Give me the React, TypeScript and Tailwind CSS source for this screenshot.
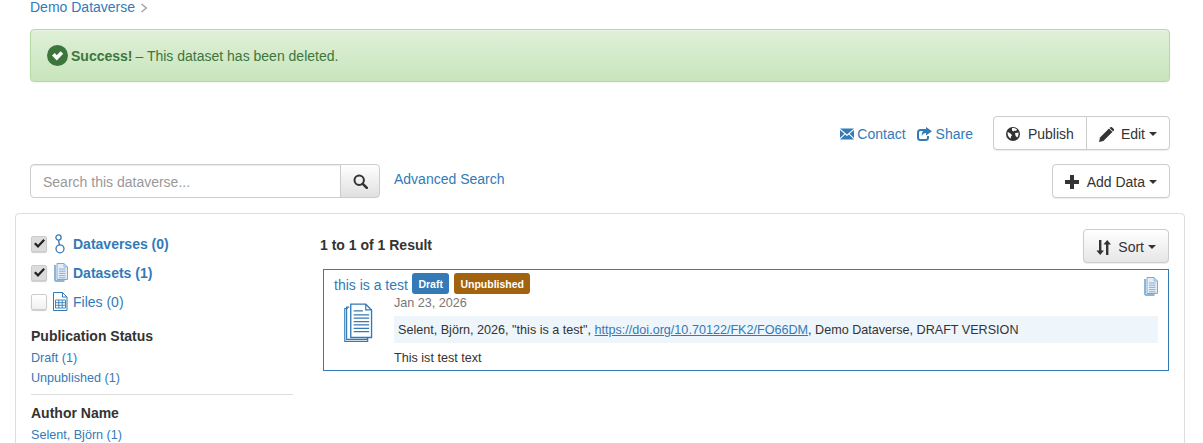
import React from "react";

const Caret = () => (
  <span className="inline-block w-0 h-0 ml-[4px] align-middle border-x-[4px] border-x-transparent border-t-[4px] border-t-[#333]" />
);

const Btn = ({ children, className = "" }: { children: React.ReactNode; className?: string }) => (
  <div
    className={
      "flex items-center h-[34px] pt-[2px] border border-[#ccc] bg-white text-[#333] text-[14px] rounded-[4px] shadow-[0_1px_1px_rgba(0,0,0,0.075)] " +
      className
    }
  >
    {children}
  </div>
);

const Envelope = () => (
  <svg width="14" height="12" viewBox="0 0 14 12" fill="#337ab7" className="mr-[3px]">
    <path d="M0 0.5h14L7 6.5z" />
    <path d="M0 2l4.4 3.8L0 10z" />
    <path d="M14 2L9.6 5.8 14 10z" />
    <path d="M5.1 6.4L7 8l1.9-1.6L14 11.5H0z" />
  </svg>
);

const ShareIcon = () => (
  <svg width="15" height="14" viewBox="0 0 15 14" fill="none" className="mr-[4px]">
    <path d="M10 3H3.500C2 3 1 4 1 5.500v5C1 12 2 13 3.500 13h5C10 13 11 12 11 10.500V9" stroke="#337ab7" strokeWidth="2" />
    <path d="M9 0l6 4.200L9 8.500V6C7 6 5.600 7 4.800 9 4.600 5.500 6 2.800 9 2.600z" fill="#337ab7" />
  </svg>
);

const Globe = () => (
  <svg width="14" height="14" viewBox="0 0 14 14" className="mr-[8px]">
    <circle cx="7" cy="7" r="7" fill="#333" />
    <path d="M6 1.200C8 .8 10 1.600 11 2.600L10 4 8.500 3.400 7.500 4.600 6 3.600zM9 6l3.400-.4c.4 1.800-.2 3.800-1.200 5L9.600 9zM1.600 5.200L3 5.600l2 1.400 1 1.600-1 1-.2 2C3 11 1.200 8.400 1.600 5.200z" fill="#fff" />
  </svg>
);

const Pencil = () => (
  <svg width="15" height="15" viewBox="0 0 15 15" fill="#333" className="mr-[7px]">
    <path d="M0 15l1-4.400L10 1.600l3.400 3.400L4.400 14z" />
    <path d="M11 .6c.8-.8 1.600-.8 2.200-.2l1.400 1.400c.6.6.6 1.400-.2 2.200l-.4.4L10.600 1z" />
  </svg>
);

const Plus = () => (
  <svg width="14" height="14" viewBox="0 0 14 14" fill="#333" className="mr-[8px]">
    <path d="M5 0h4v5h5v4H9v5H5V9H0V5h5z" />
  </svg>
);

const SortIcon = () => (
  <svg width="15" height="15" viewBox="0 0 15 15" fill="#333" className="mr-[7px]">
    <path d="M3 0h2.400v10.500H8L4.200 15 .4 10.500H3z" />
    <path d="M10 15h2.400V4.500H15L11.200 0 7.400 4.500H10z" />
  </svg>
);

const Search = () => (
  <svg width="15" height="15" viewBox="0 0 15 15" fill="none" stroke="#333">
    <circle cx="6.200" cy="6.200" r="4.700" strokeWidth="2" />
    <path d="M9.800 9.800L13.800 13.800" strokeWidth="2.600" strokeLinecap="round" />
  </svg>
);

const CheckCircle = () => (
  <svg width="21" height="21" viewBox="0 0 21 21" className="mr-[3px]">
    <circle cx="10.500" cy="10.500" r="10.500" fill="#3c763d" />
    <path d="M5 10.500l2.800-2.500 2 2.200 3.800-4 2.600 2.500-6.400 6.800z" fill="#fff" />
  </svg>
);

const DataverseIcon = () => (
  <svg width="12" height="20" viewBox="0 0 12 20" fill="none" stroke="#337ab7" strokeWidth="1.300">
    <circle cx="4.500" cy="3.500" r="2.600" />
    <path d="M4.500 6.100L5.500 11" />
    <circle cx="6" cy="14.800" r="4" />
  </svg>
);

const DatasetSmall = () => (
  <svg width="15" height="19" viewBox="0 0 15 19">
    <path d="M3 2H1v15.500L2.500 19h9v-2H3z" fill="#8fb4d6" />
    <path d="M4 .5h7l3.500 3.500v12.500H4z" fill="#e4edf6" stroke="#7fa9cf" strokeWidth="1" />
    <path d="M11 .5V4h3.500" fill="none" stroke="#7fa9cf" strokeWidth="0.800" />
    <path d="M6 6h6.500M6 8.200h6.500M6 10.400h6.500M6 12.600h6.500M6 14.800h6.500" stroke="#7fa9cf" strokeWidth="0.900" />
  </svg>
);

const FileIcon = () => (
  <svg width="15" height="19" viewBox="0 0 15 19" fill="none" stroke="#337ab7">
    <path d="M.5.500H9.500L14 5v13.500H.5z" />
    <path d="M9.500.500V5H14" />
    <path d="M2.500 8h10v8h-10zM2.500 10.700h10M2.500 13.300h10M5.800 8v8M9.200 8v8" strokeWidth="0.900" />
  </svg>
);

const DatasetLarge = () => (
  <svg width="29" height="40" viewBox="0 0 30 41" fill="none" stroke="#337ab7" strokeWidth="1.200">
    <path d="M5.500 4H2.700v33.500H24v-2" />
    <path d="M4 5.500H.8v34h23.700V36" />
    <path d="M7 1H22.500L28.500 7V35.500H7z" fill="#fff" strokeWidth="1.400" />
    <path d="M22.500 1V7H28.500" />
    <path d="M10 8H19.500M10 12H26M10 15.500H26M10 19H26M10 22.500H26M10 26H26M10 29.500H26" strokeWidth="1.300" />
  </svg>
);

const Check = () => (
  <svg width="11" height="9" viewBox="0 0 11 9" fill="#222">
    <path d="M0 5l1.600-1.500L4 5.800 9.400 0 11 1.500 4 9z" />
  </svg>
);

const Box = ({ checked }: { checked?: boolean }) => (
  <span
    className={
      "flex items-center justify-center w-[16px] h-[16px] rounded-[2px] border border-[#ccc] shadow-[0_1px_1px_rgba(0,0,0,0.2)] " +
      (checked ? "bg-[#dcdcdc]" : "bg-gradient-to-b from-white to-[#f0f0f0]")
    }
  >
    {checked && <Check />}
  </span>
);

export default function App() {
  return (
    <div className="w-[1203px] h-[443px] overflow-hidden bg-white text-[14px] leading-[20px] text-[#333] font-['Liberation_Sans',Arial,sans-serif]">
      <div className="px-[30px] w-[1200px]">
        <div className="flex items-center h-[14px] text-[#337ab7]">
          <a>Demo Dataverse</a>
          <svg width="8" height="10" viewBox="0 0 8 10" fill="none" stroke="#999" strokeWidth="1.200" className="ml-[5px] mt-[1px]">
            <path d="M1.500 1l5 4-5 4" />
          </svg>
        </div>
        <div className="flex items-center mt-[15px] h-[53px] pl-[16px] border border-[#b2dba1] rounded-[4px] bg-gradient-to-b from-[#dff0d8] to-[#c8e5bc] text-[#3c763d] shadow-[inset_0_1px_0_rgba(255,255,255,0.25),0_1px_2px_rgba(0,0,0,0.05)]">
          <CheckCircle />
          <b className="font-bold">Success!</b>
          <span className="ml-[3px]">– This dataset has been deleted.</span>
        </div>

        <div className="flex items-center justify-end mt-[34px] h-[34px]">
          <a className="flex items-center pt-[2px] text-[#337ab7]">
            <Envelope />
            Contact
          </a>
          <a className="flex items-center pt-[2px] ml-[11px] text-[#337ab7]">
            <ShareIcon />
            Share
          </a>
          <Btn className="ml-[20px] !rounded-r-none pl-[12px] pr-[12px]">
            <Globe />
            Publish
          </Btn>
          <Btn className="-ml-px !rounded-l-none pl-[12px] pr-[12px]">
            <Pencil />
            Edit
            <Caret />
          </Btn>
        </div>

        <div className="flex items-center justify-between mt-[14px] h-[34px]">
          <div className="flex items-start">
            <div className="flex items-center w-[311px] h-[34px] pt-[1px] px-[12px] border border-[#ccc] rounded-l-[4px] text-[#999] shadow-[inset_0_1px_1px_rgba(0,0,0,0.075)]">
              Search this dataverse...
            </div>
            <div className="flex items-center justify-center w-[40px] h-[34px] pt-[1px] -ml-px border border-[#ccc] rounded-r-[4px] bg-gradient-to-b from-white to-[#e0e0e0]">
              <Search />
            </div>
            <a className="ml-[14px] mt-[5px] text-[#337ab7]">Advanced Search</a>
          </div>
          <Btn className="pl-[12px] pr-[12px]">
            <Plus />
            Add Data
            <Caret />
          </Btn>
        </div>
      </div>

      <div className="flex ml-[15px] mt-[15px] w-[1170px] h-[300px] border border-[#ddd] rounded-t-[4px] pl-[15px] pr-[15px] pt-[15px]">
        <div className="w-[262px] shrink-0">
          <div className="flex items-center h-[29px]">
            <Box checked />
            <span className="flex justify-center w-[20px] ml-[3px]"><DataverseIcon /></span>
            <b className="ml-[3px] text-[#337ab7]">Dataverses (0)</b>
          </div>
          <div className="flex items-center h-[29px]">
            <Box checked />
            <span className="flex justify-center w-[20px] ml-[3px]"><DatasetSmall /></span>
            <b className="ml-[3px] text-[#337ab7]">Datasets (1)</b>
          </div>
          <div className="flex items-center h-[29px]">
            <Box />
            <span className="flex justify-center w-[20px] ml-[3px]"><FileIcon /></span>
            <span className="ml-[3px] text-[#337ab7]">Files (0)</span>
          </div>
          <div className="mt-[10px] font-bold">Publication Status</div>
          <div className="mt-[2px] text-[12.6px] leading-[20px] text-[#337ab7]">
            <div>Draft (1)</div>
            <div>Unpublished (1)</div>
          </div>
          <div className="mt-[6px] border-t border-[#ddd]" />
          <div className="mt-[8px] font-bold">Author Name</div>
          <div className="mt-[2px] text-[12.6px] leading-[20px] text-[#337ab7]">Selent, Björn (1)</div>
        </div>

        <div className="flex-1 ml-[27px]">
          <div className="flex items-center justify-between h-[34px]">
            <b className="text-[14px] mb-[3px]">1 to 1 of 1 Result</b>
            <Btn className="pl-[12px] pr-[12px] bg-gradient-to-b from-white to-[#e6e6e6]">
              <SortIcon />
              Sort
              <Caret />
            </Btn>
          </div>
          <div className="ml-[3px] mt-[6px] h-[102px] border border-[#337ab7] pl-[10px] pr-[10px]">
            <div className="flex items-center mt-[3px] h-[21px]">
              <a className="text-[#337ab7] pt-[2px]">this is a test</a>
              <span className="ml-[4px] px-[6.5px] h-[21px] flex items-center rounded-[3px] bg-[#337ab7] text-white text-[10.5px] font-bold">Draft</span>
              <span className="ml-[5px] px-[6px] h-[21px] flex items-center rounded-[3px] bg-[#a3620e] text-white text-[10.5px] font-bold">Unpublished</span>
              <span className="ml-auto mt-[6px]"><DatasetSmall /></span>
            </div>
            <div className="flex mt-[1px]">
              <div className="w-[60px] shrink-0 pl-[10px] pt-[8px]">
                <DatasetLarge />
              </div>
              <div className="flex-1 text-[12.6px] leading-[17px]">
                <div className="text-[#777]">Jan 23, 2026</div>
                <div className="mt-[4px] h-[27px] pt-[2px] flex items-center pl-[4px] bg-[#eef5fb]">
                  Selent, Björn, 2026, "this is a test",&nbsp;
                  <a className="text-[#337ab7] underline">https://doi.org/10.70122/FK2/FO66DM</a>
                  , Demo Dataverse, DRAFT VERSION
                </div>
                <div className="mt-[7px]">This ist test text</div>
              </div>
            </div>
          </div>
        </div>
      </div>
    </div>
  );
}
